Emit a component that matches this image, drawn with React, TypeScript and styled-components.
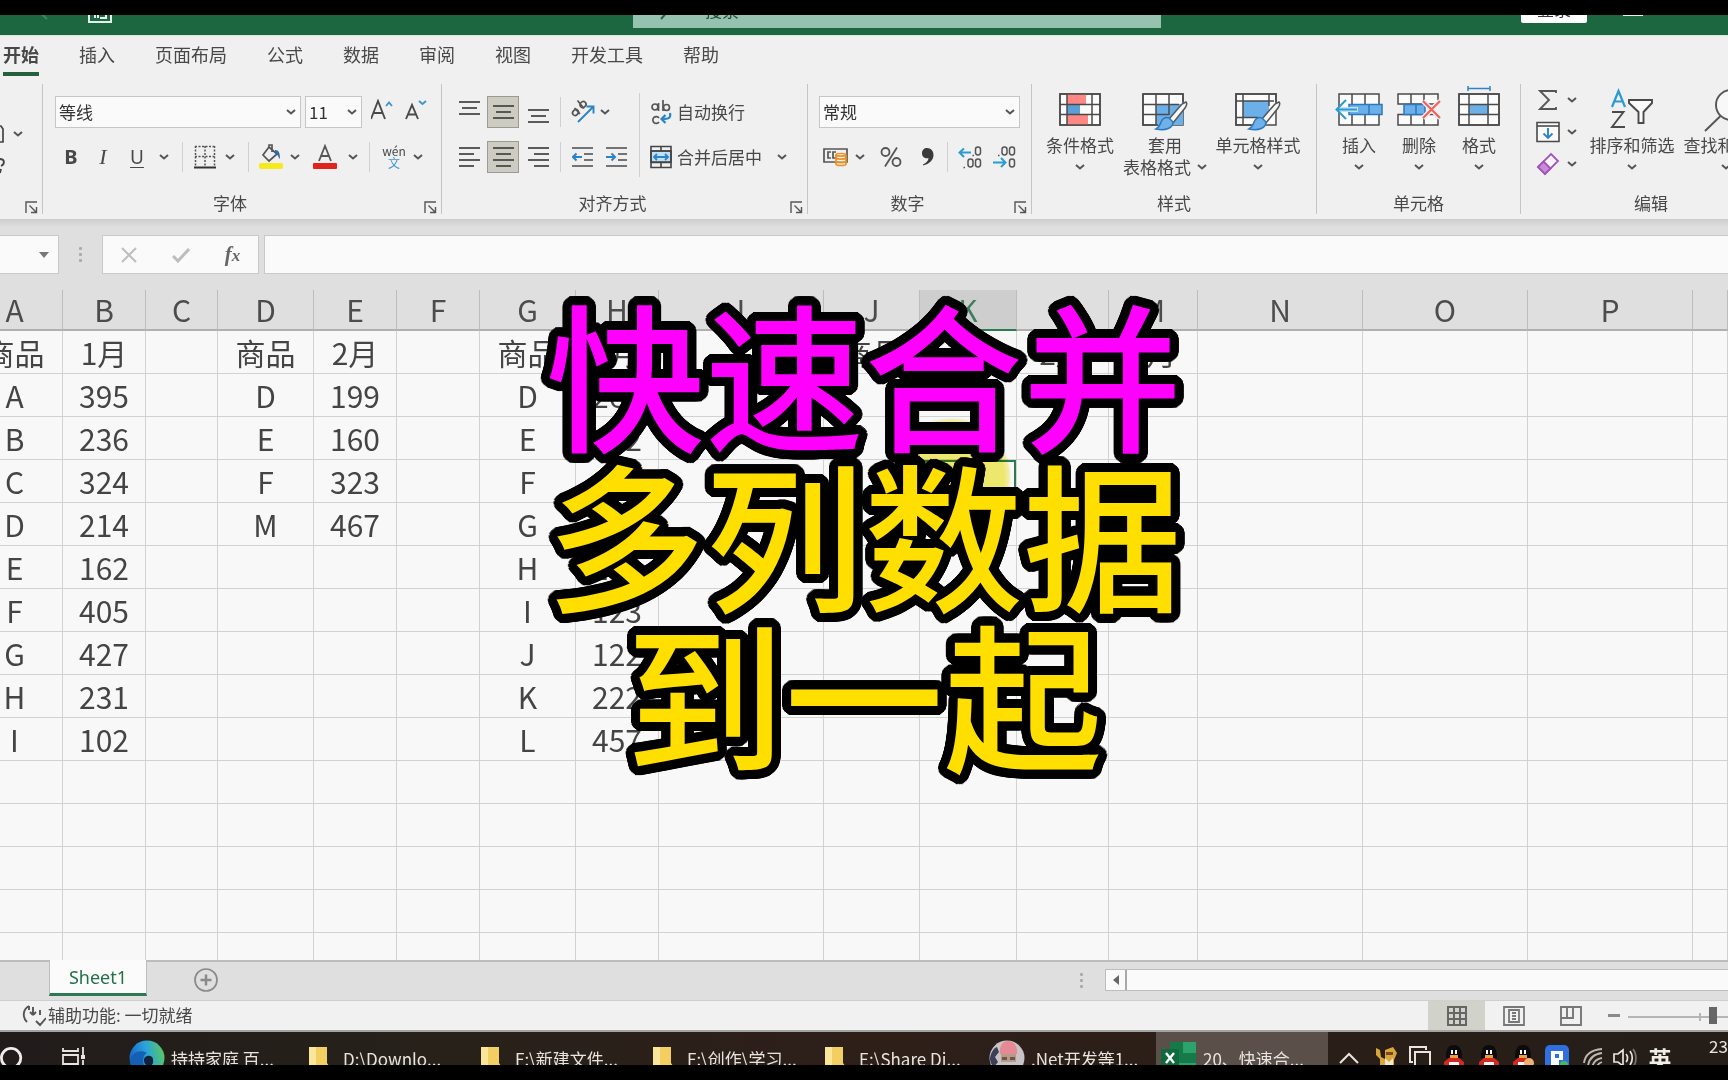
import React from "react";
import styled, { createGlobalStyle, css } from "styled-components";

const Global = createGlobalStyle`
  *, *::before, *::after { box-sizing: border-box; }
  html, body { margin: 0; padding: 0; background: #000; }
  body, button, input, select {
    font-family: "Noto Sans CJK SC", "Noto Sans", sans-serif;
    font-size: 17px;
    color: #484848;
  }
  button { border: 0; padding: 0; margin: 0; background: none; cursor: pointer; }
`;

/* ---------- shell ---------- */
const Frame = styled.div`
  position: relative;
  display: flex;
  flex-direction: column;
  height: 100vh;
  min-height: 720px;
  padding: 15px 0;
  background: #000;
  overflow: hidden;
`;

/* ---------- title bar ---------- */
const TitleBar = styled.header`
  flex: none;
  height: 20px;
  overflow: hidden;
  display: flex;
  align-items: flex-end;
  background: #1c6640;
`;
const TitleInner = styled.div`
  flex: 1;
  height: 52px;
  display: grid;
  grid-template-columns: 633px minmax(200px, 528px) 1fr;
  align-items: center;
`;
const QuickAccess = styled.div`
  display: flex;
  padding-left: 34px;
  gap: 38px;
  align-items: center;
`;
const SearchBox = styled.label`
  display: flex;
  align-items: center;
  gap: 24px;
  height: 38px;
  padding-left: 26px;
  background: #96c2b0;
  color: #1c4a34;
`;
const SearchInput = styled.input`
  flex: 1;
  min-width: 0;
  border: 0;
  outline: 0;
  background: transparent;
  color: #1c4a34;
  &::placeholder { color: #1c4a34; opacity: 1; }
`;
const WindowTools = styled.div`
  display: flex;
  justify-content: flex-end;
  align-items: center;
  gap: 36px;
  padding-right: 85px;
`;
const LoginButton = styled.button`
  width: 66px;
  height: 28px;
  line-height: 28px;
  border-radius: 2px;
  background: #fff;
  color: #333;
`;
const MinimizeButton = styled.button`
  width: 20px;
  height: 14px;
  border-bottom: 2px solid #e8f0ec;
`;

/* ---------- ribbon ---------- */
const Tabs = styled.nav`
  flex: none;
  display: flex;
  gap: 40px;
  height: 45px;
  padding: 2px 3px 4px;
  background: #f0f0f0;
  border-top: 1px solid #d6eadf;
`;
const Tab = styled.button<{ $active?: boolean }>`
  flex: none;
  height: 38px;
  padding-bottom: 2px;
  font-size: 18px;
  line-height: 32px;
  border-bottom: 4px solid ${(p) => (p.$active ? "#24613f" : "transparent")};
  font-weight: ${(p) => (p.$active ? 700 : 400)};
`;
const Ribbon = styled.section`
  flex: none;
  display: flex;
  height: 139px;
  padding: 4px 0 5px;
  background: #f0f0f0;
  overflow: hidden;
`;
const Group = styled.div<{ $w: number; $pad?: number }>`
  flex: none;
  display: flex;
  flex-direction: column;
  width: ${(p) => p.$w}px;
  padding-left: ${(p) => p.$pad ?? 12}px;
  border-right: 1px solid #c4c4c4;
`;
const GroupBody = styled.div`
  flex: 1;
  display: flex;
`;
const GroupFoot = styled.div<{ $pad?: number }>`
  display: flex;
  align-items: center;
  height: 22px;
  margin-left: -${(p) => p.$pad ?? 12}px;
`;
const GroupName = styled.span`
  flex: 1;
  text-align: center;
  line-height: 22px;
`;
const Launcher = styled.button`
  width: 24px;
  height: 22px;
  padding: 8px 0 0 7px;
  svg { display: block; }
`;
const Rows = styled.div<{ $w?: number }>`
  display: flex;
  flex-direction: column;
  gap: 13px;
  padding-top: 12px;
  width: ${(p) => (p.$w ? p.$w + "px" : "auto")};
`;
const Row = styled.div<{ $gap?: number }>`
  display: flex;
  align-items: center;
  height: 32px;
  gap: ${(p) => p.$gap ?? 0}px;
`;
const Tool = styled.button<{ $w: number; $on?: boolean }>`
  flex: none;
  display: flex;
  align-items: center;
  justify-content: center;
  width: ${(p) => p.$w}px;
  height: 32px;
  ${(p) => p.$on && css`background: #cdccc3; border: 1px solid #9b9b92;`}
`;
const Glyph = styled.span<{ $bold?: boolean; $italic?: boolean; $under?: boolean; $size?: number }>`
  font-family: ${(p) => (p.$italic ? '"Liberation Serif", serif' : '"Noto Sans", sans-serif')};
  font-size: ${(p) => p.$size ?? 20}px;
  line-height: 24px;
  font-weight: ${(p) => (p.$bold ? 700 : 400)};
  font-style: ${(p) => (p.$italic ? "italic" : "normal")};
  text-decoration: ${(p) => (p.$under ? "underline" : "none")};
  text-underline-offset: 3px;
`;
const Sep = styled.i<{ $l: number; $r: number; $h?: number }>`
  flex: none;
  width: 1px;
  height: ${(p) => p.$h ?? 30}px;
  margin: 0 ${(p) => p.$r}px 0 ${(p) => p.$l}px;
  background: #d0d0d0;
`;
const TallSep = styled(Sep)`
  margin-top: 9px;
`;
const Wide = styled.button`
  display: flex;
  align-items: center;
  gap: 4px;
  height: 32px;
  line-height: 28px;
`;
const ChevGap = styled.span`
  display: flex;
  margin-left: 11px;
`;
const ComboWrap = styled.label<{ $w: number }>`
  flex: none;
  display: flex;
  align-items: center;
  justify-content: flex-end;
  width: ${(p) => p.$w}px;
  height: 32px;
  padding-right: 4px;
  background: #fafafa;
  border: 1px solid #c6c6c6;
`;
const ComboSelect = styled.select`
  flex: 1;
  min-width: 0;
  height: 30px;
  padding: 0 0 2px 3px;
  border: 0;
  outline: 0;
  appearance: none;
  background: transparent;
  color: #333;
`;
const Big = styled.button<{ $w: number }>`
  flex: none;
  display: flex;
  flex-direction: column;
  align-items: center;
  width: ${(p) => p.$w}px;
  height: 100px;
  white-space: nowrap;
`;
const BigArt = styled.span`
  display: flex;
  align-items: flex-end;
  justify-content: center;
  height: 50px;
  overflow: visible;
`;
const BigText = styled.span`
  display: flex;
  align-items: center;
  justify-content: center;
  gap: 6px;
  height: 22px;
  line-height: 22px;
`;
const SmallCol = styled.div`
  display: flex;
  flex-direction: column;
`;
const SmallRow = styled.div`
  display: flex;
  align-items: center;
  height: 33px;
  margin-top: -1px;
`;
const ClipRows = styled.div`
  display: flex;
  flex-direction: column;
  gap: 12px;
  padding-top: 40px;
`;
const ClipLine = styled.div`
  display: flex;
  align-items: center;
  gap: 9px;
  height: 20px;
`;

/* ---------- formula bar ---------- */
const FormulaBar = styled.section`
  flex: none;
  display: flex;
  align-items: center;
  height: 71px;
  padding: 16px 0;
  background: linear-gradient(#cdcdcd, #dfdfdf 8px, #dfdfdf);
`;
const NameBox = styled.button`
  width: 59px;
  height: 39px;
  display: flex;
  align-items: center;
  justify-content: flex-end;
  padding-right: 9px;
  background: #fafafa;
  border: 1px solid #c9c9c9;
  border-left: 0;
`;
const Dots = styled.span`
  display: flex;
  flex-direction: column;
  gap: 3px;
  i { width: 3px; height: 3px; background: #ababab; border-radius: 1px; }
`;
const DotSlot = styled.span`
  display: flex;
  justify-content: center;
  width: 43px;
`;
const FxBox = styled.div`
  display: flex;
  width: 157px;
  height: 39px;
  align-items: center;
  background: #fafafa;
  border: 1px solid #c9c9c9;
  margin-right: 5px;
`;
const FxLabel = styled.span`
  font-family: "Liberation Serif", serif;
  font-style: italic;
  font-weight: 700;
  font-size: 21px;
  color: #666;
  small { font-size: 17px; }
`;
const FormulaInput = styled.input`
  flex: 1;
  min-width: 0;
  height: 39px;
  background: #fafafa;
  border: 1px solid #c9c9c9;
  border-right: 0;
  outline: 0;
`;

/* ---------- grid ---------- */
const SheetArea = styled.main`
  position: relative;
  flex: 1 1 0;
  min-height: 0;
  overflow: hidden;
  background: #f8f8f8;
`;
const Sheet = styled.table`
  table-layout: fixed;
  width: calc(100% + 33px);
  margin-left: -33px;
  border-collapse: separate;
  border-spacing: 0;
  font-size: 30px;
  line-height: 42px;
  color: #444;
  text-align: center;
`;
const ColHead = styled.th<{ $on?: boolean }>`
  height: 41px;
  padding: 0;
  line-height: 39px;
  font-weight: 400;
  overflow: hidden;
  color: ${(p) => (p.$on ? "#3d7d5d" : "#4c4c4c")};
  background: ${(p) => (p.$on ? "#cecece" : "#dfdfdf")};
  border-right: 1px solid #bcbcbc;
  border-bottom: ${(p) => (p.$on ? "2px solid #2c7a53" : "2px solid #b0b0b0")};
`;
const Cell = styled.td<{ $on?: boolean }>`
  height: 43px;
  padding: 0;
  white-space: nowrap;
  overflow: hidden;
  border-right: 1px solid #d2d2d2;
  border-bottom: 1px solid #d2d2d2;
  ${(p) => p.$on && css`box-shadow: inset 0 0 0 2px #2c7a53;`}
`;
const CursorHalo = styled.div`
  position: absolute;
  left: 893px;
  top: 128px;
  width: 118px;
  height: 118px;
  border-radius: 50%;
  background: radial-gradient(closest-side, #f4ee70 88%, #f8f4a8 96%, #f8f8f8);
  mix-blend-mode: multiply;
`;

/* ---------- sheet tabs ---------- */
const SheetTabs = styled.section`
  flex: none;
  display: flex;
  height: 41px;
  padding-bottom: 2px;
  background: #dfdfdf;
  border-top: 2px solid #bdbdbd;
  border-bottom: 1px solid #cfcfcf;
`;
const SheetTab = styled.button`
  width: 98px;
  height: 36px;
  margin: -2px 46px 0 49px;
  font-family: "Noto Sans", sans-serif;
  font-size: 18px;
  color: #23704a;
  background: #fbfbfb;
  border: 1px solid #bdbdbd;
  border-top: 0;
  border-bottom: 3px solid #2c7a53;
`;
const PlainButton = styled.button`
  display: flex;
  align-items: center;
`;
const Scroller = styled.div`
  display: flex;
  align-items: center;
  margin-left: auto;
  width: 37.5%;
  gap: 22px;
`;
const ScrollTrack = styled.div`
  flex: 1;
  display: flex;
  height: 22px;
  background: #fafafa;
  border: 1px solid #bdbdbd;
  border-right: 0;
`;
const ScrollArrow = styled.button`
  width: 21px;
  display: flex;
  align-items: center;
  justify-content: center;
  border-right: 2px solid #a8a8a8;
`;

/* ---------- status bar ---------- */
const StatusBar = styled.footer`
  flex: none;
  display: flex;
  align-items: center;
  height: 31px;
  padding-left: 22px;
  background: #f1f1f1;
  border-bottom: 2px solid #a3a3a3;
`;
const Access = styled.button`
  display: flex;
  align-items: center;
  gap: 2px;
  height: 29px;
  padding-bottom: 2px;
  margin-right: auto;
`;
const ViewButton = styled.button<{ $on?: boolean }>`
  width: 57px;
  height: 29px;
  display: flex;
  align-items: center;
  justify-content: center;
  background: ${(p) => (p.$on ? "#d1d2c9" : "transparent")};
`;
const Zoom = styled.label`
  display: flex;
  align-items: center;
  width: 129px;
  padding-left: 9px;
  gap: 8px;
  overflow: hidden;
`;
const Minus = styled.button`
  flex: none;
  width: 12px;
  height: 3px;
  background: #8a8a8a;
`;
const ZoomRange = styled.input`
  flex: none;
  width: 170px;
  height: 18px;
  margin: 0;
  appearance: none;
  background: linear-gradient(#b5b5b5, #b5b5b5) 0 9px / 100% 2px no-repeat,
    linear-gradient(#b5b5b5, #b5b5b5) 71px 6px / 2px 8px no-repeat;
  &::-webkit-slider-thumb {
    appearance: none;
    width: 8px;
    height: 17px;
    background: #666;
  }
`;

/* ---------- taskbar ---------- */
const Taskbar = styled.nav`
  flex: none;
  height: 33px;
  overflow: hidden;
  background: linear-gradient(90deg, #211c1b, #27211a 25%, #2e1f19 50%, #2a1f18 75%, #241d18);
`;
const TaskRow = styled.div`
  display: flex;
  align-items: center;
  height: 52px;
`;
const TaskIcon = styled.button<{ $w: number }>`
  flex: none;
  display: flex;
  align-items: center;
  justify-content: center;
  width: ${(p) => p.$w}px;
  height: 52px;
`;
const Task = styled.button<{ $on?: boolean }>`
  flex: 0 1 172px;
  display: flex;
  align-items: center;
  gap: 6px;
  height: 52px;
  padding-left: 5px;
  font-size: 17px;
  color: #e8e4e0;
  white-space: nowrap;
  overflow: hidden;
  background: ${(p) => (p.$on ? "#5a4f49" : "transparent")};
`;
const IconSlot = styled.span`
  flex: none;
  display: flex;
  justify-content: center;
  width: 36px;
`;
const Tray = styled.div`
  flex: none;
  display: flex;
  margin-left: auto;
  color: #e8e4e0;
`;
const Ime = styled.span`
  font-size: 23px;
  font-weight: 700;
  color: #f0ece8;
`;
const Clock = styled.time`
  width: 46px;
  padding: 2px 0 0 27px;
  font-size: 17px;
  line-height: 24px;
  white-space: nowrap;
  overflow: hidden;
`;

/* ---------- caption ---------- */
const outline = Array.from({ length: 40 }, (_, i) => {
  const a = (i / 40) * Math.PI * 2;
  return `${Math.round(Math.cos(a) * 90) / 10}px ${Math.round(Math.sin(a) * 90) / 10}px 0 #000`;
}).join(", ");
const Caption = styled.h1`
  position: absolute;
  inset: 0;
  margin: 0;
  padding-top: 291px;
  display: flex;
  flex-direction: column;
  align-items: center;
  font-size: 159px;
  line-height: 160px;
  font-weight: 500;
  color: #ffdf00;
  text-shadow: ${outline};
  pointer-events: none;
`;
const CaptionLine = styled.span<{ $hot?: boolean }>`
  white-space: nowrap;
  color: ${(p) => (p.$hot ? "#ff00ff" : "#ffdf00")};
`;

/* ---------- drawings ---------- */
const Chev = () => (
  <svg width="10" height="6" viewBox="0 0 10 6" fill="none" stroke="#555" strokeWidth="2">
    <path d="M1 1l4 3.5L9 1" />
  </svg>
);
const LaunchArt = () => (
  <svg width="13" height="13" viewBox="0 0 13 13" fill="none" stroke="#555" strokeWidth="1.4">
    <path d="M1 12V1h11M4.500 4.500l7 7M11.500 6v5.500H6" />
  </svg>
);
const Lines = ({ rows, y = 1 }: { rows: [number, number][]; y?: number }) => (
  <svg width="21" height="24" viewBox="0 0 21 24" stroke="#4a4a4a" strokeWidth="1.800">
    {rows.map(([a, b], i) => (
      <path key={i} d={`M${a} ${y + i * 6}H${b}`} />
    ))}
  </svg>
);
const Indent = ({ right }: { right?: boolean }) => (
  <svg width="22" height="22" viewBox="0 0 22 22" fill="none" stroke="#4a4a4a" strokeWidth="1.700">
    <path d="M0 2h21M12 8h9M12 14h9M0 20h21" />
    <path stroke="#2b84c6" strokeWidth="2" d={right ? "M0 11h9M5.500 7.500L9 11l-3.500 3.500" : "M10 11H1M4.500 7.500L1 11l3.500 3.500"} />
  </svg>
);
const FontArt = ({ up }: { up?: boolean }) => (
  <svg width="24" height="26" viewBox="0 0 24 26" fill="none" stroke="#4a4a4a" strokeWidth="1.900">
    <path d={up ? "M0 20L7 2l7 18M2.500 14h9" : "M1 20L7 6l6 14M3 15.500h8"} />
    <path stroke="#3d97cf" d={up ? "M15 7l3-3.500L21 7" : "M14 2l3.500 3L21 2"} />
  </svg>
);
const BorderArt = () => (
  <svg width="22" height="24" viewBox="0 0 22 24" fill="none" stroke="#555">
    <path strokeWidth="1.500" strokeDasharray="2 1.500" d="M1 1.500h20M1 11.500h20M1.500 1v20M11 1v20M20.500 1v20" />
    <path stroke="#333" strokeWidth="2" d="M0 22.500h22" />
  </svg>
);
const BucketArt = () => (
  <svg width="24" height="26" viewBox="0 0 24 26" fill="none">
    <path d="M10 3L4 11l6 6 8-7zM10 3V1h3v7" stroke="#555" strokeWidth="1.700" />
    <path d="M16 6c4 0 5 3 5 9-2-2-2-5-5-5z" fill="#2b6ea8" />
    <rect y="19" width="24" height="6" rx="2" fill="#f6ea1c" />
  </svg>
);
const FontColorArt = () => (
  <svg width="24" height="26" viewBox="0 0 24 26" fill="none">
    <path d="M6 17l6-15 6 15M8 12h8" stroke="#555" strokeWidth="1.800" />
    <rect y="19" width="24" height="6" rx="1" fill="#e0241b" />
  </svg>
);
const Pinyin = styled.span`
  display: flex;
  flex-direction: column;
  align-items: center;
  font-size: 12px;
  line-height: 12px;
  b { font-weight: 400; color: #3d97cf; }
`;
const OrientArt = () => (
  <svg width="26" height="26" viewBox="0 0 26 26" fill="none" stroke="#555" strokeWidth="1.700">
    <ellipse cx="5.500" cy="13.500" rx="3.200" ry="2.600" transform="rotate(-45 5.500 13.500)" />
    <path d="M4.500 9l5.500 6M7.500 1.500l6.500 8" />
    <ellipse cx="13" cy="5.500" rx="3.200" ry="2.800" transform="rotate(-45 13 5.500)" />
    <path stroke="#2b84c6" strokeWidth="1.900" d="M8 23L23 8M16.500 7.500H23.500V14.500" />
  </svg>
);
const WrapArt = () => (
  <svg width="24" height="26" viewBox="0 0 24 26" fill="none" stroke="#555" strokeWidth="1.700">
    <circle cx="6" cy="8" r="3" />
    <path d="M9.500 4v8M14 1v11M10 19a3.400 3.400 0 1 0 0 4" />
    <circle cx="17.500" cy="8.500" r="3" />
    <path stroke="#2b84c6" strokeWidth="2.200" d="M21 14c1 5-1 6-8 6M16.500 16L12.500 20l4 4" />
  </svg>
);
const MergeArt = () => (
  <svg width="24" height="24" viewBox="0 0 24 24" fill="none" stroke="#444" strokeWidth="1.600">
    <path fill="#bfe0f4" d="M2 6h20v11H2z" />
    <path d="M2 1.500h20v21H2zM2 6h20M2 17.500h20M12 1.500V6M12 17.500v5" />
    <path stroke="#2b84c6" strokeWidth="1.800" d="M5 12h14M8 9l-3 3 3 3M16 9l3 3-3 3" />
  </svg>
);
const MoneyArt = () => (
  <svg width="26" height="22" viewBox="0 0 26 22" fill="none" stroke="#555" strokeWidth="1.700">
    <path d="M1 3h23v13H1zM8 6H5v6h3M13 6h-3v6h3" />
    <path fill="#fdf1e0" stroke="#e8912b" d="M13 9c0-2 10-2 10 0v9c0 2-10 2-10 0zM13 12c2 1.500 8 1.500 10 0M13 15.500c2 1.500 8 1.500 10 0M13 9c2 1.500 8 1.500 10 0" />
  </svg>
);
const PercentArt = () => (
  <svg width="22" height="22" viewBox="0 0 22 22" fill="none" stroke="#555" strokeWidth="1.800">
    <circle cx="5.500" cy="6" r="4" />
    <circle cx="16.500" cy="16" r="4" />
    <path d="M17 1.500L5 20.500" />
  </svg>
);
const CommaArt = () => (
  <svg width="13" height="18" viewBox="0 0 13 18">
    <path fill="#3a3a3a" d="M6 0c4 0 6.500 3 6.500 7 0 5-4 9-10.500 10.500v-1C5 15 7.500 13 7.500 10 3 11 1 8 1 5.200 1 2 3.200 0 6 0z" />
  </svg>
);
const DecimalArt = ({ less }: { less?: boolean }) => (
  <svg width="24" height="24" viewBox="0 0 24 24" fill="none" stroke="#555" strokeWidth="1.500">
    {less ? (
      <>
        <rect x="10" y="2" width="5" height="8" rx="2.400" />
        <rect x="17.500" y="2" width="5" height="8" rx="2.400" />
        <rect x="17.500" y="14" width="5" height="8" rx="2.400" />
        <path d="M6 10.500h1.500" />
        <path stroke="#2b9bd4" strokeWidth="2" d="M1 17.500h12M9 13l4.500 4.500L9 22" />
      </>
    ) : (
      <>
        <rect x="17.500" y="2" width="5" height="8" rx="2.400" />
        <rect x="10" y="14" width="5" height="8" rx="2.400" />
        <rect x="17.500" y="14" width="5" height="8" rx="2.400" />
        <path d="M5.500 22.500H7M14.500 10.500H16" />
        <path stroke="#2b9bd4" strokeWidth="2" d="M13 7.500H2M6 3.500L1.500 7.500 6 12" />
      </>
    )}
  </svg>
);
const Brush = () => (
  <g>
    <path d="M44 10c2 2 0 4-1 6L31 31l-4-4L40 12z" fill="#f7f7f7" stroke="#555" strokeWidth="1.500" />
    <path d="M27 26l4 4c0 6-7 9-17 7 4-2 4-4 5-7 2-4 5-5 8-4z" fill="#6fb1e8" stroke="#2b78bd" strokeWidth="1.500" />
  </g>
);
const CondArt = () => (
  <svg width="42" height="42" viewBox="0 0 42 42" fill="none" stroke="#4a4a4a" strokeWidth="1.500">
    <path fill="#fbfbfb" d="M1 2h40v31H1z" />
    <path stroke="none" fill="#ff8784" d="M8 2h19v10H8zM8 23h21v10H8z" />
    <path stroke="none" fill="#5b9fd8" d="M8 13h13v9H8z" />
    <path d="M1 2h40v31H1zM1 12.500h40M1 22.500h40M8 2v31M33 2v31" />
  </svg>
);
const TableArt = () => (
  <svg width="46" height="42" viewBox="0 0 46 42" fill="none" stroke="#4a4a4a" strokeWidth="1.500">
    <path fill="#fbfbfb" d="M1 2h40v31H1z" />
    <path stroke="none" fill="#6cb0ea" d="M14 12h27v21H14z" />
    <path d="M41 10V2H1v31h15M1 12.500h36M1 22.500h26M14 2v31M27 2v21" />
    <Brush />
  </svg>
);
const StyleArt = () => (
  <svg width="46" height="42" viewBox="0 0 46 42" fill="none" stroke="#4a4a4a" strokeWidth="1.500">
    <path fill="#fbfbfb" d="M1 2h40v31H1z" />
    <path stroke="none" fill="#6cb0ea" d="M8 9h26v16H8z" />
    <path d="M41 10V2H1v31h15M1 9h38M1 25.500h22M8 2v31M34 2v12" />
    <Brush />
  </svg>
);
const InsertArt = () => (
  <svg width="48" height="42" viewBox="0 0 48 42" fill="none" stroke="#4a4a4a" strokeWidth="1.500">
    <path fill="#fbfbfb" d="M4 2h40v31H4zM17 2v31M30 2v31" />
    <path fill="#6cb0ea" stroke="#2b78bd" d="M14 12.500h33v10H14zM34 12.500v10" />
    <path stroke="#c4e0f5" strokeWidth="5" d="M3 17.500h20" />
    <path stroke="#2b9bd4" strokeWidth="2" d="M22 17.500H2M11 8L1.500 17.500 11 27" />
  </svg>
);
const DeleteArt = () => (
  <svg width="44" height="42" viewBox="0 0 44 42" fill="none" stroke="#4a4a4a" strokeWidth="1.500">
    <path fill="#fbfbfb" d="M1 2h40v10H1zM1 22.500h40V33H1zM14 2v10M27 2v10M14 22.500V33M27 22.500V33" />
    <path fill="#6cb0ea" stroke="#2b78bd" d="M7 12.500h21v10H7zM19 12.500v10" />
    <path stroke="#f0f0f0" strokeWidth="5" d="M26 9l17 17M43 9L26 26" />
    <path stroke="#f0645c" strokeWidth="2.200" d="M26 9l17 17M43 9L26 26" />
  </svg>
);
const FormatArt = () => (
  <svg width="42" height="49" viewBox="0 0 42 49" fill="none" stroke="#4a4a4a" strokeWidth="1.500">
    <path fill="#fbfbfb" d="M1 9h40v31H1z" />
    <path stroke="none" fill="#6cb0ea" d="M11 19h20v11H11z" />
    <path d="M1 9h40v31H1zM1 19.500h40M1 29.500h40M11 9v31M30 9v31" />
    <path stroke="#2b84c6" d="M10 3.500h22M10 1v5M32 1v5" />
  </svg>
);
const SortArt = () => (
  <svg width="44" height="46" viewBox="0 0 44 46" fill="none" stroke="#4a4a4a" strokeWidth="1.900">
    <path stroke="#2b9bd4" strokeWidth="2.200" d="M2 19l6.500-16L15 19M4.500 13.500h8" />
    <path d="M2 24h11.500L2 39h13" />
    <path fill="#fbfbfb" d="M19 12h23v3l-8.500 9v11h-5V24L19 15z" />
  </svg>
);
const FindArt = () => (
  <svg width="46" height="46" viewBox="0 0 46 46" fill="none" stroke="#555" strokeWidth="1.900">
    <circle cx="28" cy="17" r="15" fill="#f8f8f8" />
    <path d="M17.500 28L2 43" />
  </svg>
);
const SumArt = () => (
  <svg width="20" height="22" viewBox="0 0 20 22" fill="none" stroke="#555" strokeWidth="1.800">
    <path d="M18 4V2H2l9 9-9 9h16v-2" />
  </svg>
);
const FillArt = () => (
  <svg width="24" height="22" viewBox="0 0 24 22" fill="none" stroke="#4a4a4a" strokeWidth="1.600">
    <path fill="#fafafa" d="M1 1.500h22v19H1z" />
    <path d="M1 5h22" />
    <path stroke="#2b84c6" strokeWidth="1.900" d="M12 7v10M7.500 12.500L12 17l4.500-4.500" />
  </svg>
);
const EraserArt = () => (
  <svg width="24" height="24" viewBox="0 0 24 24" fill="none" stroke="#a056b8" strokeWidth="1.800">
    <path fill="#fbf6fc" d="M15 2l7 7L9 22l-7-7z" />
    <path fill="#c98bd8" d="M7.500 9.500l7 7L9 22l-7-7z" />
  </svg>
);
const Folder = () => (
  <svg width="22" height="24" viewBox="0 0 22 24">
    <path fill="#f3cf62" d="M1 1h18v16l2 3v4H1z" />
    <path fill="#fbe59a" d="M1 1h7v22H1z" />
  </svg>
);
const EdgeArt = () => (
  <svg width="36" height="36" viewBox="0 0 36 36">
    <defs>
      <linearGradient id="edge" x1="0" x2="1" y1="0.500" y2="0.300">
        <stop offset="0" stopColor="#1668c4" />
        <stop offset="0.500" stopColor="#2aa3dc" />
        <stop offset="1" stopColor="#5cc95c" />
      </linearGradient>
    </defs>
    <circle cx="18" cy="18" r="17.500" fill="url(#edge)" />
    <path fill="#1560b4" d="M1 20C3 12 12 9 18 13c-5 2-6 12 2 22C9 36 1 29 1 20z" />
    <path fill="#12213a" d="M15 20c0-5 8-6 9-1s-2 6-2 8c-4 0-7-3-7-7z" />
  </svg>
);
const Avatar = () => (
  <svg width="36" height="36" viewBox="0 0 36 36">
    <circle cx="18" cy="18" r="17.500" fill="#c9c3c6" />
    <path fill="#3b3f58" d="M1 18C2 12 5 8 8 7l2 5-4 5 3 5-4 5C2 24 1 22 1 18z" />
    <path fill="#e58a94" d="M11 14C10 5 14 1 19 1s10 4 9 13z" />
    <path fill="#b8998a" d="M12 14h15v8H12z" />
    <path fill="#6b5648" d="M13 17h5v3h-5zM21 17h5v3h-5z" />
  </svg>
);
const ExcelArt = () => (
  <svg width="36" height="34" viewBox="0 0 36 34">
    <path fill="#2aa36c" d="M9 1h26v32H9z" />
    <path fill="#157a48" d="M9 1h13v11H9zM9 12h26v10H9z" />
    <path fill="#0f6a3c" d="M0 8h18v18H0z" />
    <path stroke="#fff" strokeWidth="2.400" d="M5 12l8 10M13 12L5 22" />
  </svg>
);
const Penguin = ({ badge }: { badge?: boolean }) => (
  <svg width="22" height="28" viewBox="0 0 22 28">
    <path fill="#0b0b0b" d="M3 14C3 4 6 1 11 1s8 3 8 13z" />
    <path fill="#fff" d="M8 6h2v4H8zM12 6h2v4h-2z" />
    <path fill="#e9a23a" d="M7 11h8v3H7z" />
    <path fill="#d22a22" d="M1 18l5-4h10l5 4v5H1z" />
    <path fill="#f7f3f0" d="M6 18h10v9H6z" />
    {badge && <circle cx="17" cy="19" r="5" fill="#f0b070" />}
  </svg>
);

const cols = ["A", "B", "C", "D", "E", "F", "G", "H", "I", "J", "K", "L", "M", "N", "O", "P", "Q"];
const widths = [96, 83, 72, 96, 83, 83, 96, 83, 165, 96, 97, 92, 89, 165, 165, 165];
const blank = (n: number) => Array<string>(n).fill("");
const data: string[][] = [
  ["商品", "1月", "", "商品", "2月", "", "商品", "3月", "", "商品", "1月", "2月", "3月"],
  ["A", "395", "", "D", "199", "", "D", "265"],
  ["B", "236", "", "E", "160", "", "E", "132"],
  ["C", "324", "", "F", "323", "", "F", "145"],
  ["D", "214", "", "M", "467", "", "G", "156"],
  ["E", "162", "", "", "", "", "H", "178"],
  ["F", "405", "", "", "", "", "I", "123"],
  ["G", "427", "", "", "", "", "J", "122"],
  ["H", "231", "", "", "", "", "K", "222"],
  ["I", "102", "", "", "", "", "L", "457"],
  [], [], [], [], [],
].map((r) => [...r, ...blank(17 - r.length)]);

const Combo = ({ w, label, value }: { w: number; label: string; value: string }) => (
  <ComboWrap $w={w}>
    <ComboSelect aria-label={label} defaultValue={value}>
      <option>{value}</option>
    </ComboSelect>
    <Chev />
  </ComboWrap>
);
const Foot = ({ name, pad, launch }: { name: string; pad?: number; launch?: boolean }) => (
  <GroupFoot $pad={pad}>
    <GroupName>{name}</GroupName>
    {launch && <Launcher aria-label={name + "设置"}><LaunchArt /></Launcher>}
  </GroupFoot>
);
const BigButton = ({ w, art, text, second }: { w: number; art: React.ReactNode; text: string; second?: string }) => (
  <Big $w={w}>
    <BigArt>{art}</BigArt>
    <BigText>{text}</BigText>
    <BigText>{second}<Chev /></BigText>
  </Big>
);

export default function App() {
  return (
    <Frame>
      <Global />
      <TitleBar>
        <TitleInner>
          <QuickAccess>
            <svg width="16" height="28" viewBox="0 0 16 28" stroke="#3f8562" strokeWidth="2"><path d="M2 14l11 10" /></svg>
            <svg width="24" height="28" viewBox="0 0 24 28" fill="none" stroke="#e6f0ea" strokeWidth="2"><path d="M1 1h22v26H1zM7 23v-9h3v9M12 23h6v-5" /></svg>
          </QuickAccess>
          <SearchBox>
            <svg width="20" height="24" viewBox="0 0 20 24" fill="none" stroke="#2f5f4a" strokeWidth="2"><circle cx="13" cy="8" r="6" /><path d="M9 14l-7 8" /></svg>
            <SearchInput aria-label="搜索" placeholder="搜索" />
          </SearchBox>
          <WindowTools>
            <LoginButton>登录</LoginButton>
            <MinimizeButton aria-label="最小化" />
          </WindowTools>
        </TitleInner>
      </TitleBar>

      <Tabs>
        {["开始", "插入", "页面布局", "公式", "数据", "审阅", "视图", "开发工具", "帮助"].map((t, i) => (
          <Tab key={t} $active={i === 0}>{t}</Tab>
        ))}
      </Tabs>

      <Ribbon>
        <Group $w={43} $pad={0}>
          <GroupBody>
            <ClipRows>
              <ClipLine>
                <svg width="4" height="18" viewBox="0 0 4 18" fill="none" stroke="#444" strokeWidth="1.700"><path d="M0 1h1l2 3v13H0" /></svg>
                <Chev />
              </ClipLine>
              <ClipLine>
                <svg width="5" height="16" viewBox="0 0 5 16" fill="none" stroke="#444" strokeWidth="1.800"><path d="M0 1c5 0 5 5 1 7M1 11l-1 4" /></svg>
              </ClipLine>
            </ClipRows>
          </GroupBody>
          <Foot name="" pad={0} launch />
        </Group>

        <Group $w={399}>
          <GroupBody>
            <Rows>
              <Row $gap={4}>
                <Combo w={246} label="字体" value="等线" />
                <Combo w={57} label="字号" value="11" />
                <Row>
                  <Tool $w={34} aria-label="增大字号"><FontArt up /></Tool>
                  <Tool $w={34} aria-label="减小字号"><FontArt /></Tool>
                </Row>
              </Row>
              <Row>
                <Tool $w={32}><Glyph $bold>B</Glyph></Tool>
                <Tool $w={32}><Glyph $italic $size={22}>I</Glyph></Tool>
                <Tool $w={36}><Glyph $under $size={19}>U</Glyph></Tool>
                <Tool $w={18} aria-label="下划线选项"><Chev /></Tool>
                <Sep $l={9} $r={8} />
                <Tool $w={28} aria-label="边框"><BorderArt /></Tool>
                <Tool $w={22} aria-label="边框选项"><Chev /></Tool>
                <Sep $l={7} $r={8} />
                <Tool $w={28} aria-label="填充颜色"><BucketArt /></Tool>
                <Tool $w={20} aria-label="填充选项"><Chev /></Tool>
                <Tool $w={40} aria-label="字体颜色"><FontColorArt /></Tool>
                <Tool $w={16} aria-label="字体颜色选项"><Chev /></Tool>
                <Sep $l={8} $r={8} />
                <Tool $w={32}><Pinyin><span>wén</span><b>文</b></Pinyin></Tool>
                <Tool $w={16} aria-label="拼音选项"><Chev /></Tool>
              </Row>
            </Rows>
          </GroupBody>
          <Foot name="字体" launch />
        </Group>

        <Group $w={366} $pad={10}>
          <GroupBody>
            <Rows $w={187}>
              <Row>
                <Tool $w={35} aria-label="顶端对齐"><Lines y={2} rows={[[0, 21], [3, 18], [0, 21]]} /></Tool>
                <Tool $w={32} $on aria-label="垂直居中"><Lines y={6} rows={[[0, 21], [3, 18], [0, 21]]} /></Tool>
                <Tool $w={38} aria-label="底端对齐"><Lines y={10} rows={[[0, 21], [3, 18], [0, 21]]} /></Tool>
                <Sep $l={3} $r={6} />
                <Tool $w={32} aria-label="方向"><OrientArt /></Tool>
                <Tool $w={12} aria-label="方向选项"><Chev /></Tool>
              </Row>
              <Row>
                <Tool $w={35} aria-label="左对齐"><Lines y={3} rows={[[0, 21], [0, 15], [0, 21], [0, 15]]} /></Tool>
                <Tool $w={32} $on aria-label="居中"><Lines y={3} rows={[[0, 21], [3, 18], [0, 21], [3, 18]]} /></Tool>
                <Tool $w={38} aria-label="右对齐"><Lines y={3} rows={[[0, 21], [6, 21], [0, 21], [6, 21]]} /></Tool>
                <Sep $l={3} $r={6} />
                <Tool $w={32} aria-label="减少缩进"><Indent /></Tool>
                <Tool $w={36} aria-label="增加缩进"><Indent right /></Tool>
              </Row>
            </Rows>
            <TallSep $l={0} $r={9} $h={84} />
            <Rows>
              <Wide><WrapArt />自动换行</Wide>
              <Wide><MergeArt />合并后居中<ChevGap><Chev /></ChevGap></Wide>
            </Rows>
          </GroupBody>
          <Foot name="对齐方式" pad={10} launch />
        </Group>

        <Group $w={224} $pad={11}>
          <GroupBody>
            <Rows>
              <Combo w={201} label="数字格式" value="常规" />
              <Row>
                <Tool $w={34} aria-label="会计格式"><MoneyArt /></Tool>
                <Tool $w={14} aria-label="会计格式选项"><Chev /></Tool>
                <Tool $w={48} aria-label="百分比"><PercentArt /></Tool>
                <Tool $w={24} aria-label="千位分隔"><CommaArt /></Tool>
                <Sep $l={8} $r={4} />
                <Tool $w={36} aria-label="增加小数位"><DecimalArt /></Tool>
                <Tool $w={32} aria-label="减少小数位"><DecimalArt less /></Tool>
              </Row>
            </Rows>
          </GroupBody>
          <Foot name="数字" pad={11} launch />
        </Group>

        <Group $w={285} $pad={10}>
          <GroupBody>
            <BigButton w={76} art={<CondArt />} text="条件格式" />
            <BigButton w={94} art={<TableArt />} text="套用" second="表格格式" />
            <BigButton w={92} art={<StyleArt />} text="单元格样式" />
          </GroupBody>
          <Foot name="样式" pad={10} />
        </Group>

        <Group $w={204}>
          <GroupBody>
            <BigButton w={60} art={<InsertArt />} text="插入" />
            <BigButton w={60} art={<DeleteArt />} text="删除" />
            <BigButton w={60} art={<FormatArt />} text="格式" />
          </GroupBody>
          <Foot name="单元格" />
        </Group>

        <Group $w={261}>
          <GroupBody>
            <SmallCol>
              <SmallRow><Tool $w={30} aria-label="求和"><SumArt /></Tool><Tool $w={18} aria-label="求和选项"><Chev /></Tool></SmallRow>
              <SmallRow><Tool $w={30} aria-label="填充"><FillArt /></Tool><Tool $w={18} aria-label="填充选项"><Chev /></Tool></SmallRow>
              <SmallRow><Tool $w={30} aria-label="清除"><EraserArt /></Tool><Tool $w={18} aria-label="清除选项"><Chev /></Tool></SmallRow>
            </SmallCol>
            <BigButton w={102} art={<SortArt />} text="排序和筛选" />
            <BigButton w={86} art={<FindArt />} text="查找和选择" />
          </GroupBody>
          <Foot name="编辑" />
        </Group>
      </Ribbon>

      <FormulaBar>
        <NameBox aria-label="名称框">
          <svg width="10" height="6" viewBox="0 0 10 6"><path fill="#777" d="M0 0h10L5 6z" /></svg>
        </NameBox>
        <DotSlot><Dots><i /><i /><i /></Dots></DotSlot>
        <FxBox>
          <Tool $w={52} aria-label="取消"><svg width="16" height="16" viewBox="0 0 16 16" stroke="#bdbdbd" strokeWidth="2"><path d="M1 1l14 14M15 1L1 15" /></svg></Tool>
          <Tool $w={52} aria-label="输入"><svg width="18" height="16" viewBox="0 0 18 16" fill="none" stroke="#bdbdbd" strokeWidth="3"><path d="M1 9l5 5L17 2" /></svg></Tool>
          <Tool $w={51} aria-label="插入函数"><FxLabel>f<small>x</small></FxLabel></Tool>
        </FxBox>
        <FormulaInput aria-label="编辑栏" />
      </FormulaBar>

      <SheetArea>
        <Sheet>
          <colgroup>
            {widths.map((w, i) => <col key={i} style={{ width: w }} />)}
            <col />
          </colgroup>
          <thead>
            <tr>{cols.map((c) => <ColHead key={c} scope="col" $on={c === "K"}>{c === "Q" ? "" : c}</ColHead>)}</tr>
          </thead>
          <tbody>
            {data.map((r, y) => (
              <tr key={y}>{r.map((v, x) => <Cell key={x} $on={y === 3 && x === 10}>{v}</Cell>)}</tr>
            ))}
          </tbody>
        </Sheet>
        <CursorHalo />
      </SheetArea>

      <SheetTabs>
        <SheetTab>Sheet1</SheetTab>
        <PlainButton aria-label="新工作表">
          <svg width="26" height="26" viewBox="0 0 26 26" fill="none" stroke="#8a8a8a" strokeWidth="1.700"><circle cx="13" cy="13" r="11" /><path strokeWidth="2.500" d="M7.500 13h11M13 7.500v11" /></svg>
        </PlainButton>
        <Scroller>
          <Dots><i /><i /><i /></Dots>
          <ScrollTrack>
            <ScrollArrow aria-label="向左滚动"><svg width="6" height="10" viewBox="0 0 6 10"><path fill="#666" d="M6 0v10L0 5z" /></svg></ScrollArrow>
          </ScrollTrack>
        </Scroller>
      </SheetTabs>

      <StatusBar>
        <Access>
          <svg width="24" height="24" viewBox="0 0 24 24" fill="none" stroke="#555" strokeWidth="1.900"><path d="M7 3C1 6 0 14 5 19M7 3v4M11 4v8M11 12l-3-3M11 12l3-3M18 7v5M14 18l4 4 6-7" /></svg>
          辅助功能: 一切就绪
        </Access>
        <ViewButton $on aria-label="普通"><svg width="20" height="20" viewBox="0 0 20 20" fill="none" stroke="#666" strokeWidth="2"><path d="M1 1h18v18H1zM7 1v18M13 1v18M1 7h18M1 13h18" /></svg></ViewButton>
        <ViewButton aria-label="页面布局"><svg width="22" height="20" viewBox="0 0 22 20" fill="none" stroke="#777" strokeWidth="1.800"><path d="M1 1h20v18H1zM6 4h10v12H6zM9 7h4M9 10h4M9 13h4" /></svg></ViewButton>
        <ViewButton aria-label="分页预览"><svg width="22" height="20" viewBox="0 0 22 20" fill="none" stroke="#777" strokeWidth="1.900"><path d="M1 1h20v18H1zM1 12h12V1M7 1v11" /></svg></ViewButton>
        <Zoom>
          <Minus aria-label="缩小" />
          <ZoomRange type="range" aria-label="缩放" min={0} max={100} defaultValue={50} />
        </Zoom>
      </StatusBar>

      <Taskbar>
        <TaskRow>
          <TaskIcon $w={24} aria-label="搜索"><svg width="26" height="26" viewBox="0 0 26 26" fill="none" stroke="#f0ece8" strokeWidth="3"><circle cx="12" cy="13" r="10.500" /></svg></TaskIcon>
          <TaskIcon $w={100} aria-label="任务视图"><svg width="24" height="24" viewBox="0 0 24 24" fill="none" stroke="#e8e4e0" strokeWidth="1.800"><path d="M1 2v3h15V2M1 9h15v9H1zM1 23v-2h15v2M21 1v8M21 14v9" /><path strokeWidth="4" d="M21 9v4" /></svg></TaskIcon>
          <Task><IconSlot><EdgeArt /></IconSlot>持持家庭 百...</Task>
          <Task><IconSlot><Folder /></IconSlot>D:\Downlo...</Task>
          <Task><IconSlot><Folder /></IconSlot>F:\新建文件...</Task>
          <Task><IconSlot><Folder /></IconSlot>F:\创作\学习...</Task>
          <Task><IconSlot><Folder /></IconSlot>E:\Share Di...</Task>
          <Task><IconSlot><Avatar /></IconSlot>.Net开发等1...</Task>
          <Task $on><IconSlot><ExcelArt /></IconSlot>20、快速合...</Task>
          <Tray>
            <TaskIcon $w={40} aria-label="显示隐藏的图标"><svg width="20" height="12" viewBox="0 0 20 12" fill="none" stroke="#e8e4e0" strokeWidth="2"><path d="M1 11l9-9 9 9" /></svg></TaskIcon>
            <TaskIcon $w={34} aria-label="助手"><svg width="24" height="26" viewBox="0 0 24 26"><path fill="#d9a63a" d="M2 3l4 2 1 7 4 2V5l8-3 4 6-3 7v9H6V14L2 10z" /><path fill="#7a4b1e" d="M12 7h7v3h-7z" /><path fill="#f4e7cf" d="M11 13l4 4 4-4v11h-8z" /></svg></TaskIcon>
            <TaskIcon $w={34} aria-label="窗口"><svg width="22" height="24" viewBox="0 0 22 24" fill="none" stroke="#e8e4e0" strokeWidth="2"><path d="M4 16H1V1h16v3M6 6h15v17H6z" /></svg></TaskIcon>
            <TaskIcon $w={34} aria-label="QQ 1"><Penguin /></TaskIcon>
            <TaskIcon $w={35} aria-label="QQ 2"><Penguin /></TaskIcon>
            <TaskIcon $w={34} aria-label="QQ 3"><Penguin badge /></TaskIcon>
            <TaskIcon $w={34} aria-label="管家"><svg width="24" height="26" viewBox="0 0 24 26"><rect width="24" height="26" rx="5" fill="#2f6fe0" /><path fill="#fff" d="M6 6h12v9h-4v5H6z" /><path fill="#2f6fe0" d="M10 9h4v4h-4z" /><circle cx="19" cy="20" r="4" fill="#44b85a" /></svg></TaskIcon>
            <TaskIcon $w={38} aria-label="网络"><svg width="20" height="20" viewBox="0 0 20 20" fill="none" stroke="#bdb8b3" strokeWidth="1.800"><path d="M1 15C2 7 8 2 19 1M5 18C6 10 11 6 19 5M9 20c1-6 4-9 10-10M14 20c0-3 2-5 5-6" /></svg></TaskIcon>
            <TaskIcon $w={26} aria-label="音量"><svg width="24" height="20" viewBox="0 0 24 20" fill="none" stroke="#e8e4e0" strokeWidth="1.700"><path d="M1 6h4l5-4v16l-5-4H1zM13 6c2 2 2 6 0 8M17 3c3 4 3 10 0 14" /><path stroke="#7a726c" d="M20 1c4 5 4 13 0 18" /></svg></TaskIcon>
            <TaskIcon $w={44} aria-label="输入法"><Ime>英</Ime></TaskIcon>
            <Clock>23</Clock>
          </Tray>
        </TaskRow>
      </Taskbar>

      <Caption>
        <CaptionLine $hot>快速合并</CaptionLine>
        <CaptionLine>多列数据</CaptionLine>
        <CaptionLine>到一起</CaptionLine>
      </Caption>
    </Frame>
  );
}
